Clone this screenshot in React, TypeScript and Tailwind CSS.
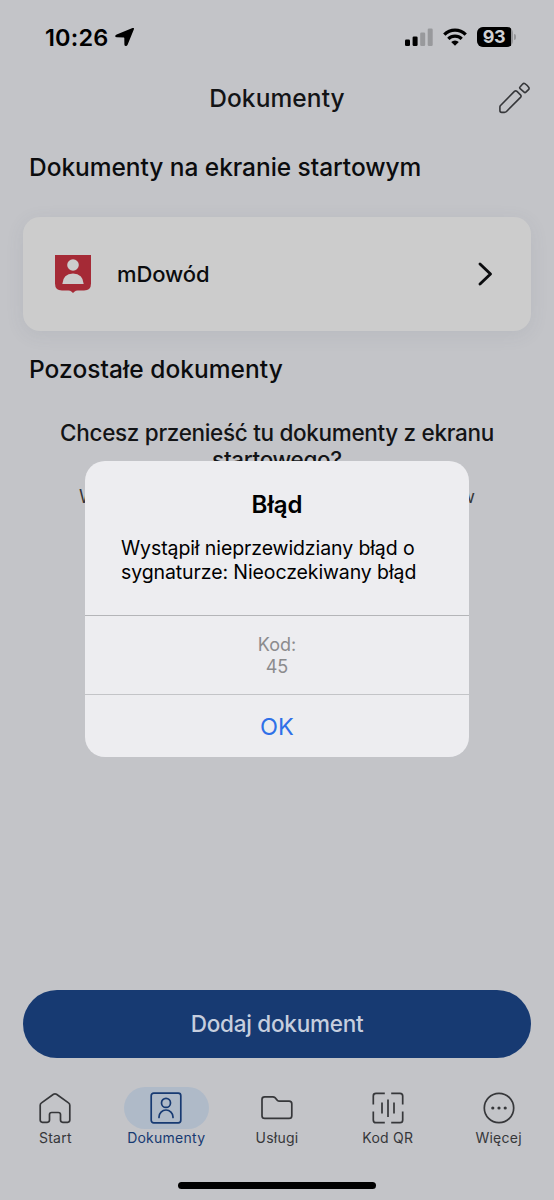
import React from "react";

function StatusBar() {
  return (
    <div className="flex h-[74px] shrink-0 items-center pl-[45px] pr-[38px] text-black">
      <span className="w-[69px] pt-px text-[23.500px] leading-none font-semibold tracking-[0.150px]">10:26</span>
      <svg className="ml-px" width="20" height="20" viewBox="0 0 20 20" fill="currentColor">
        <path d="M17.500 1.100Q19.600.5 18.900 2.300L12.600 17.700Q12 19.200 10.800 19.100 9.500 19 9.400 17.500L9.300 11Q9.300 10.600 8.900 10.600L1.900 10.300Q.2 10.200.2 9.200.1 8.200 1.700 7.600Z" />
      </svg>
      <svg className="ml-auto" width="28" height="18" viewBox="0 0 28 18">
        <rect x="0" y="11.500" width="5" height="6.500" rx="1.300" />
        <rect x="7.600" y="8.500" width="5" height="9.500" rx="1.300" />
        <rect x="15.200" y="4.500" width="5" height="13.500" rx="1.300" fill="#98999c" />
        <rect x="22.700" y="0.500" width="5" height="17.500" rx="1.300" fill="#98999c" />
      </svg>
      <svg className="ml-[10px]" width="24" height="18" viewBox="0 0 24 18">
        <path d="M1.300 6.600a15.200 15.200 0 0 1 21.400 0" fill="none" stroke="#000" strokeWidth="3.300" />
        <path d="M5.300 10.900a9.500 9.500 0 0 1 13.400 0" fill="none" stroke="#000" strokeWidth="3.200" />
        <path d="M12 17.700l-3.800-3.700a5.400 5.400 0 0 1 7.600 0Z" />
      </svg>
      <div className="ml-[10px] flex h-5 w-[36px] items-center overflow-hidden rounded-[6px] bg-[#96979a]">
        <div className="flex h-full w-[34px] items-center justify-center bg-black text-[18px] leading-none font-bold tracking-[-0.500px] text-[#d0d1d4]">
          93
        </div>
      </div>
      <div className="ml-[1px] h-[6px] w-[2px] rounded-r-full bg-[#96979a]" />
    </div>
  );
}

function PencilIcon() {
  return (
    <svg width="32" height="32" viewBox="0 0 32 32" fill="none" stroke="#36373a" strokeWidth="1.600" strokeLinejoin="round">
      <path d="M1.300 23.700 15.400 9.400q1.300-1.200 2.600 0l3.500 3.500q1.200 1.200 0 2.500L7.500 29.500q-.9.900-2.200.9H2.700q-1.800 0-1.800-1.800V25.200q0-1 .4-1.500Z" />
      <path d="M21 5l2.700-3q1-1.100 2.200-.4 2.700 1.500 4 4.100.5 1-.4 1.900l-2.600 2.500q-.9.900-1.800 0l-4-3.500q-.9-.8-.1-1.600Z" />
    </svg>
  );
}

function ShieldIcon() {
  return (
    <svg width="36" height="39" viewBox="0 0 36 39">
      <path d="M0 0h36v28.500q0 7-7 7h-6.500q-1.800 0-2.800 1L18 38l-1.700-1.500q-1-1-2.800-1H7q-7 0-7-7Z" fill="#a52a36" />
      <circle cx="18" cy="10" r="5.800" fill="#cccccc" />
      <path d="M7.300 29q.8-10.500 10.700-10.500T28.700 29Z" fill="#cccccc" />
    </svg>
  );
}

const iconProps = {
  width: 32,
  height: 32,
  viewBox: "0 0 32 32",
  fill: "none",
  stroke: "currentColor",
  strokeWidth: 1.7,
  strokeLinecap: "round" as const,
  strokeLinejoin: "round" as const,
};

const tabs = [
  {
    label: "Start",
    icon: (
      <svg {...iconProps}>
        <path d="M3.400 30.300q-2.200 0-2.200-2.200V13.200q0-1.500 1.300-2.300L14.500 2.300q1.500-1 3 0l12 8.600q1.300.8 1.300 2.300v14.900q0 2.200-2.200 2.200h-4.900q-2.200 0-2.200-2.200v-5.500q0-2.100-2.200-2.100h-6.600q-2.200 0-2.200 2.100v5.500q0 2.200-2.200 2.200Z" />
      </svg>
    ),
  },
  {
    label: "Dokumenty",
    active: true,
    icon: (
      <svg {...iconProps}>
        <rect x="1.200" y="1.200" width="29.600" height="29.600" rx="2.500" />
        <circle cx="16" cy="10.900" r="4.500" />
        <path d="M9 25.500V25a7 7 0 0 1 14 0v.5" />
      </svg>
    ),
  },
  {
    label: "Usługi",
    icon: (
      <svg {...iconProps}>
        <path d="M1 7.500q0-2.700 2.700-2.700h8.100q1.300 0 2.200.9l2.400 2.600q.8.800 2 .8h9.700q2.700 0 2.700 2.700v11.900q0 2.700-2.700 2.700H3.700Q1 26.400 1 23.700Z" />
      </svg>
    ),
  },
  {
    label: "Kod QR",
    icon: (
      <svg {...iconProps} strokeLinecap="butt">
        <path d="M1.300 12.500V4q0-2.700 2.700-2.700h8.800M19.200 1.300H28q2.700 0 2.700 2.700v8.500M30.700 19.500V28q0 2.700-2.700 2.700h-8.800M12.800 30.700H4Q1.300 30.700 1.300 28v-8.500" />
        <path d="M10 10.500v11M16 7.500v17.500M22 10.500v11" />
      </svg>
    ),
  },
  {
    label: "Więcej",
    icon: (
      <svg {...iconProps}>
        <circle cx="16" cy="16" r="14.700" />
        <g fill="currentColor" stroke="none">
          <circle cx="9.800" cy="16" r="1.600" />
          <circle cx="16" cy="16" r="1.600" />
          <circle cx="22.200" cy="16" r="1.600" />
        </g>
      </svg>
    ),
  },
];

function TabBar() {
  return (
    <nav className="mt-[29px] grid grid-cols-5">
      {tabs.map((t) => (
        <div
          key={t.label}
          className={t.active ? "flex flex-col items-center text-[#173a72]" : "flex flex-col items-center text-[#36373a]"}
        >
          <div
            className={
              t.active
                ? "flex h-[42px] w-[85px] items-center justify-center rounded-full bg-[#afbac8]"
                : "flex h-[42px] w-[85px] items-center justify-center"
            }
          >
            {t.icon}
          </div>
          <span className="text-[14px] leading-[18px] tracking-[0.250px] whitespace-nowrap">{t.label}</span>
        </div>
      ))}
    </nav>
  );
}

function ErrorDialog() {
  return (
    <div
      role="alertdialog"
      className="absolute top-[461px] left-[85px] flex h-[296px] w-[384px] flex-col overflow-hidden rounded-[20px] bg-[#ededf0] text-black"
    >
      <div className="flex h-[155px] shrink-0 flex-col items-center border-b border-[#b4b5b8] pt-[29px]">
        <h2 className="text-[24px] leading-[30px] font-semibold">Błąd</h2>
        <p className="mt-[16px] w-[312px] text-[19.500px] leading-[24px] tracking-[-0.100px] whitespace-nowrap">
          Wystąpił nieprzewidziany błąd o
          <br />
          sygnaturze: Nieoczekiwany błąd
        </p>
      </div>
      <div className="flex h-[79px] shrink-0 flex-col items-center justify-center border-b border-[#c3c4c7] pt-[2px] text-center text-[18px] leading-[22px] text-[#8b8b8d]">
        <span>Kod:</span>
        <span>45</span>
      </div>
      <button className="flex flex-1 items-center justify-center pt-[2px] text-[23.500px] text-[#2f70e8]">OK</button>
    </div>
  );
}

export default function App() {
  return (
    <div className="relative flex h-[1200px] w-[554px] flex-col overflow-hidden bg-[#c3c4c8] font-['Inter','Liberation_Sans',sans-serif] text-[#0b0c0e]">
      <StatusBar />
      <header className="flex h-[48px] shrink-0 items-center pr-[23px] pl-[55px]">
        <h1 className="flex-1 text-center text-[24.500px] leading-none font-medium tracking-[0.100px] text-[#131416]">Dokumenty</h1>
        <PencilIcon />
      </header>
      <h2 className="mt-[30px] ml-[29px] text-[24.500px] leading-[30px] font-medium tracking-[-0.050px] whitespace-nowrap">
        Dokumenty na ekranie startowym
      </h2>
      <div className="mx-[23px] mt-[35px] flex h-[114px] shrink-0 items-center rounded-[17px] bg-[#cccccc] pr-[38px] pl-[32px] shadow-[0_4px_18px_rgba(90,95,115,0.1)]">
        <ShieldIcon />
        <span className="ml-[26px] text-[22px] leading-none font-medium tracking-[-0.100px]">mDowód</span>
        <svg className="ml-auto" width="16" height="26" viewBox="0 0 16 26" fill="none" stroke="#0b0c0e" strokeWidth="2.900" strokeLinecap="round" strokeLinejoin="round">
          <path d="M3 3l10.500 10L3 23" />
        </svg>
      </div>
      <h2 className="mt-[23px] ml-[29px] text-[24.500px] leading-[30px] font-medium tracking-[0.050px] whitespace-nowrap">Pozostałe dokumenty</h2>
      <p className="mt-[35px] text-center text-[22.500px] leading-[27px] font-medium tracking-[-0.320px] whitespace-nowrap text-[#131416]">
        Chcesz przenieść tu dokumenty z ekranu
        <br />
        startowego?
      </p>
      <p className="mx-[79px] mt-[12px] flex justify-between text-[18px] leading-[24px] text-[#36373a]">
        <span>W</span>
        <span>w</span>
      </p>
      <button className="mx-[23px] mt-auto flex h-[68px] shrink-0 items-center justify-center rounded-full bg-[#173a72] text-[22.500px] font-medium tracking-[-0.250px] text-[#c6cede]">
        Dodaj dokument
      </button>
      <TabBar />
      <div className="mt-[35px] mb-[11px] flex justify-center">
        <div className="h-[7px] w-[198px] rounded-full bg-black" />
      </div>
      <ErrorDialog />
    </div>
  );
}
